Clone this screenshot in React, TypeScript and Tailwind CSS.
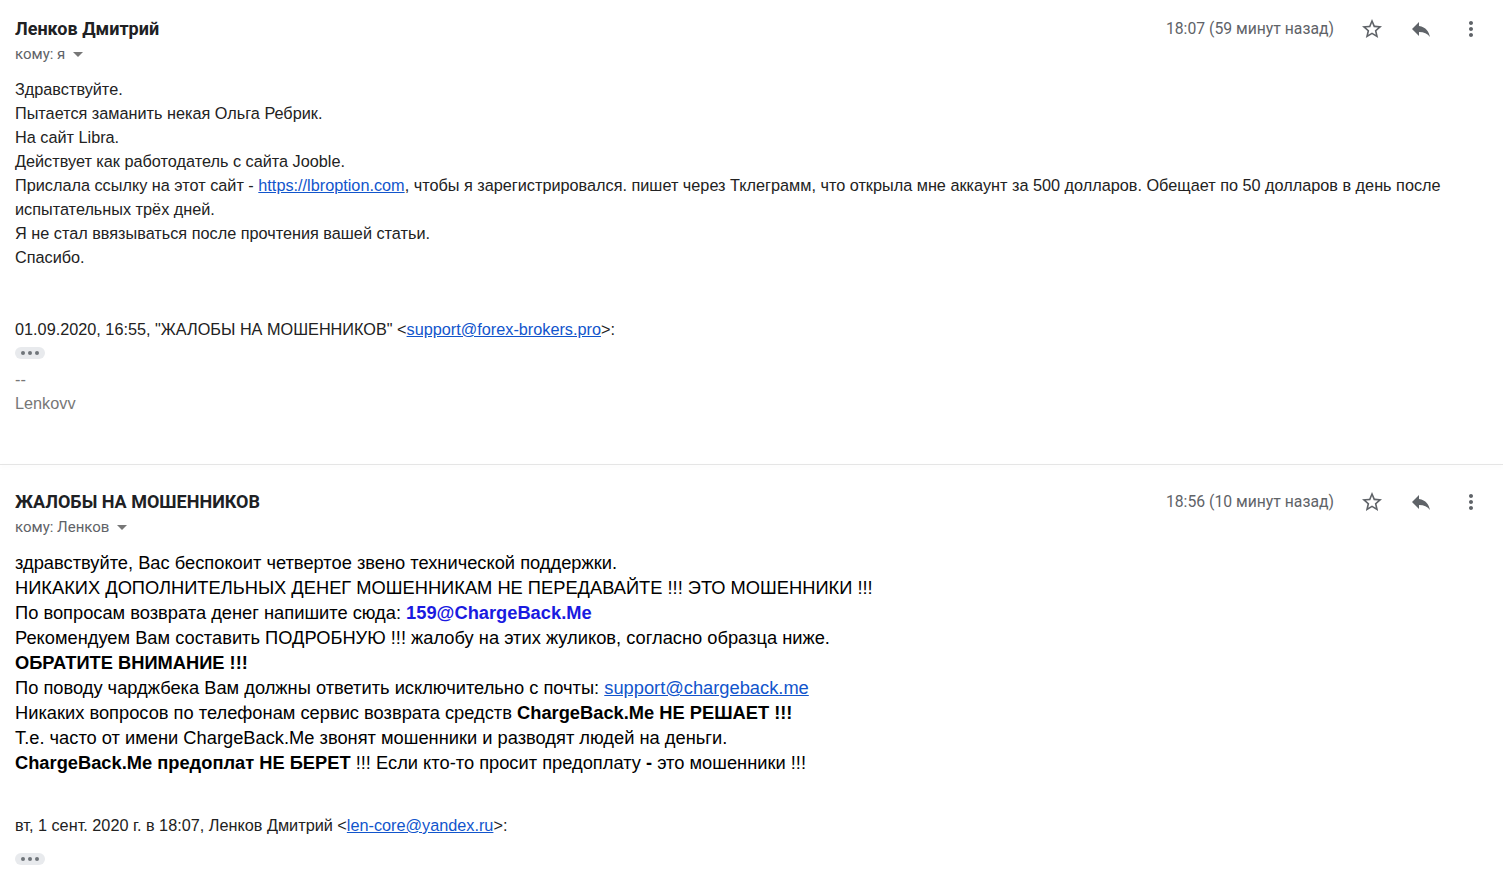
import React from 'react';

const StarIcon = () => (
  <svg viewBox="0 0 24 24" className="w-[24px] h-[24px] fill-[#5f6368]">
    <path d="M22 9.24l-7.19-.62L12 2 9.19 8.63 2 9.24l5.46 4.73L5.82 21 12 17.27 18.18 21l-1.63-7.03L22 9.24zM12 15.4l-3.76 2.27 1-4.28-3.32-2.88 4.38-.38L12 6.1l1.71 4.04 4.38.38-3.32 2.88 1 4.28L12 15.4z" />
  </svg>
);

const ReplyIcon = () => (
  <svg viewBox="0 0 24 24" className="w-[24px] h-[24px] fill-[#5f6368]">
    <path d="M10 9V5l-7 7 7 7v-4.1c5 0 8.5 1.6 11 5.1-1-5-4-10-11-11z" />
  </svg>
);

const MoreIcon = () => (
  <svg viewBox="0 0 24 24" className="w-[24px] h-[24px] fill-[#5f6368]">
    <path d="M12 8c1.1 0 2-.9 2-2s-.9-2-2-2-2 .9-2 2 .9 2 2 2zm0 2c-1.1 0-2 .9-2 2s.9 2 2 2 2-.9 2-2-.9-2-2-2zm0 6c-1.1 0-2 .9-2 2s.9 2 2 2 2-.9 2-2-.9-2-2-2z" />
  </svg>
);

const Caret = () => (
  <svg viewBox="0 0 10 6" className="w-[10px] h-[6px] fill-[#777] ml-[8px] mt-[1px]">
    <path d="M0 0h10L5 5z" />
  </svg>
);

const Ellipsis = () => (
  <div className="w-[30px] h-[12px] rounded-[6px] bg-[#e8eaed] flex items-center justify-center gap-[3px]">
    <span className="w-[4px] h-[4px] rounded-full bg-[#70757a]" />
    <span className="w-[4px] h-[4px] rounded-full bg-[#70757a]" />
    <span className="w-[4px] h-[4px] rounded-full bg-[#70757a]" />
  </div>
);

function Header({ from, to, time }: { from: string; to: string; time: string }) {
  return (
    <div className="flex items-start">
      <div className="flex-1">
        <div className="h-[24px] leading-[24px] text-[18px] font-bold text-[#202124] font-['Roboto',sans-serif]">{from}</div>
        <div className="mt-[3px] h-[20px] leading-[20px] text-[15px] text-[#5f6368] font-['Roboto',sans-serif] flex items-center">
          кому: {to}
          <Caret />
        </div>
      </div>
      <div className="flex items-center h-[24px]">
        <span className="text-[15.75px] text-[#5f6368] font-['Roboto',sans-serif] mr-[26px]">{time}</span>
        <div className="w-[24px] flex justify-center"><StarIcon /></div>
        <div className="w-[24px] flex justify-center ml-[25px]"><ReplyIcon /></div>
        <div className="w-[24px] flex justify-center ml-[26px]"><MoreIcon /></div>
      </div>
    </div>
  );
}

const link = 'text-[#1155cc] underline';

export default function App() {
  return (
    <div className="bg-white min-h-[879px] w-[1503px] overflow-hidden text-[#222]">
      {/* first message */}
      <div className="pl-[15px] pr-[20px] pt-[17px] h-[464px]">
        <Header from="Ленков Дмитрий" to="я" time="18:07 (59 минут назад)" />
        <div className="mt-[13px] text-[16.25px] leading-[24px] font-['Liberation_Sans',Arial,sans-serif] text-[#222]">
          <div>Здравствуйте.</div>
          <div>Пытается заманить некая Ольга Ребрик.</div>
          <div>На сайт Libra.</div>
          <div>Действует как работодатель с сайта Jooble.</div>
          <div>
            Прислала ссылку на этот сайт - <a className={link}>https://lbroption.com</a>, чтобы я зарегистрировался. пишет через Тклеграмм, что открыла мне аккаунт за 500 долларов. Обещает по 50 долларов в день после испытательных трёх дней.
          </div>
          <div>Я не стал ввязываться после прочтения вашей статьи.</div>
          <div>Спасибо.</div>
          <div className="h-[48px]" />
          <div>
            01.09.2020, 16:55, "ЖАЛОБЫ НА МОШЕННИКОВ" &lt;<a className={link}>support@forex-brokers.pro</a>&gt;:
          </div>
          <div className="h-[26px] pt-[6px]">
            <Ellipsis />
          </div>
          <div className="text-[#777]">--</div>
          <div className="text-[#777]">Lenkovv</div>
        </div>
      </div>

      <div className="h-px bg-[#e5e5e5] shadow-[0_2px_4px_rgba(0,0,0,0.06)]" />

      {/* second message */}
      <div className="pl-[15px] pr-[20px] pt-[25px]">
        <Header from="ЖАЛОБЫ НА МОШЕННИКОВ" to="Ленков" time="18:56 (10 минут назад)" />
        <div className="mt-[13px] text-[18.3px] leading-[25px] font-['Liberation_Sans',Arial,sans-serif] text-[#000]">
          <div>здравствуйте, Вас беспокоит четвертое звено технической поддержки.</div>
          <div>НИКАКИХ ДОПОЛНИТЕЛЬНЫХ ДЕНЕГ МОШЕННИКАМ НЕ ПЕРЕДАВАЙТЕ !!! ЭТО МОШЕННИКИ !!!</div>
          <div>
            По вопросам возврата денег напишите сюда: <b className="text-[#1a1ae0]">159@ChargeBack.Me</b>
          </div>
          <div>Рекомендуем Вам составить ПОДРОБНУЮ !!! жалобу на этих жуликов, согласно образца ниже.</div>
          <div className="font-bold">ОБРАТИТЕ ВНИМАНИЕ !!!</div>
          <div>
            По поводу чарджбека Вам должны ответить исключительно с почты: <a className={link}>support@chargeback.me</a>
          </div>
          <div>
            Никаких вопросов по телефонам сервис возврата средств <b>ChargeBack.Me НЕ РЕШАЕТ !!!</b>
          </div>
          <div>Т.е. часто от имени ChargeBack.Me звонят мошенники и разводят людей на деньги.</div>
          <div>
            <b>ChargeBack.Me предоплат НЕ БЕРЕТ</b> !!! Если кто-то просит предоплату <b>-</b> это мошенники !!!
          </div>
        </div>
        <div className="mt-[38px] text-[16.25px] leading-[24px] font-['Liberation_Sans',Arial,sans-serif] text-[#222]">
          вт, 1 сент. 2020 г. в 18:07, Ленков Дмитрий &lt;<a className={link}>len-core@yandex.ru</a>&gt;:
        </div>
        <div className="pt-[16px]">
          <Ellipsis />
        </div>
      </div>
    </div>
  );
}
